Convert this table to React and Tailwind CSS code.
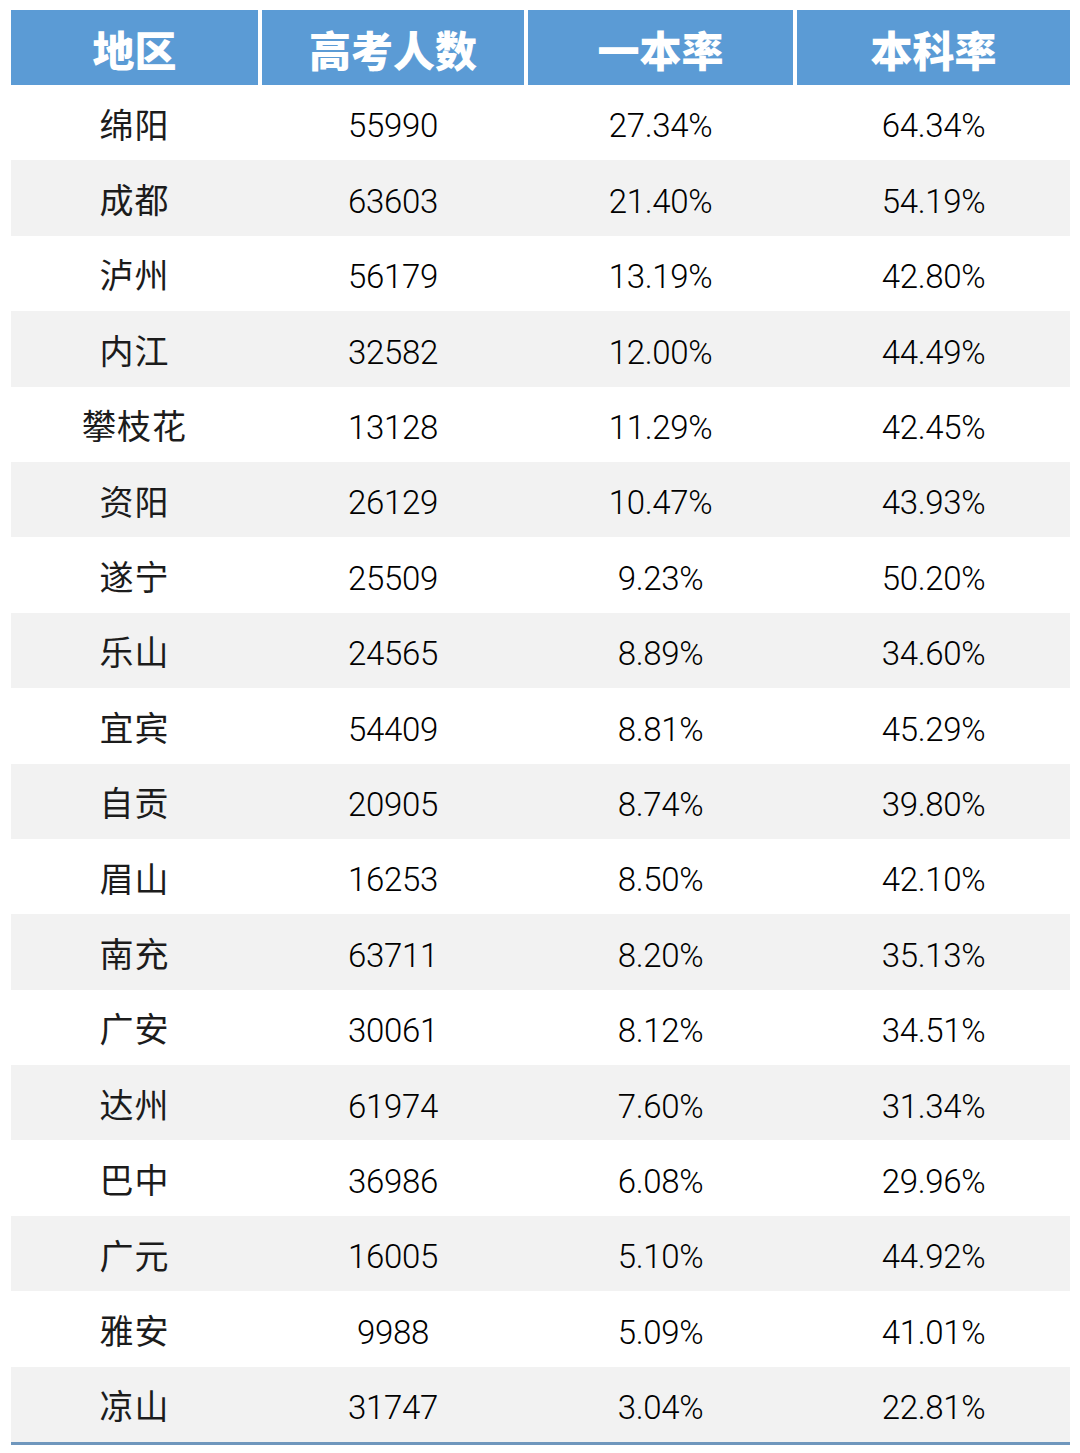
const rows = [
  ['绵阳', '55990', '27.34%', '64.34%'],
  ['成都', '63603', '21.40%', '54.19%'],
  ['泸州', '56179', '13.19%', '42.80%'],
  ['内江', '32582', '12.00%', '44.49%'],
  ['攀枝花', '13128', '11.29%', '42.45%'],
  ['资阳', '26129', '10.47%', '43.93%'],
  ['遂宁', '25509', '9.23%', '50.20%'],
  ['乐山', '24565', '8.89%', '34.60%'],
  ['宜宾', '54409', '8.81%', '45.29%'],
  ['自贡', '20905', '8.74%', '39.80%'],
  ['眉山', '16253', '8.50%', '42.10%'],
  ['南充', '63711', '8.20%', '35.13%'],
  ['广安', '30061', '8.12%', '34.51%'],
  ['达州', '61974', '7.60%', '31.34%'],
  ['巴中', '36986', '6.08%', '29.96%'],
  ['广元', '16005', '5.10%', '44.92%'],
  ['雅安', '9988', '5.09%', '41.01%'],
  ['凉山', '31747', '3.04%', '22.81%'],
];

const headers = ['地区', '高考人数', '一本率', '本科率'];

const grid = 'grid grid-cols-[247px_262px_265px_273px] gap-x-[4px]';

export default function App() {
  return (
    <div className="w-[1080px] h-[1453px] bg-white pt-[10px] pl-[11px]">
      <div className="w-[1059px]">
        <div className={grid}>
          {headers.map((h) => (
            <div
              key={h}
              className="h-[75px] bg-[#5b9bd5] flex items-center justify-center text-white text-[42px] font-black pt-[1px]"
              style={{ fontFamily: '"Noto Sans CJK SC", sans-serif' }}
            >
              {h}
            </div>
          ))}
        </div>
        {rows.map((r, i) => (
          <div key={r[0]} className={`${grid} h-[75.4px] ${i % 2 === 1 ? 'bg-[#f2f2f2]' : 'bg-white'}`}>
            {r.map((c, j) => (
              <div
                key={j}
                className={`flex items-center justify-center ${j === 0 ? 'pt-[1px] text-[34px] tracking-[1px] text-[#1c1c1c]' : 'pt-[7px] text-[33px] font-light tracking-[-0.3px] text-black'}`}
                style={{ fontFamily: j === 0 ? '"Noto Sans CJK SC", sans-serif' : 'Roboto, "Liberation Sans", sans-serif' }}
              >
                {c}
              </div>
            ))}
          </div>
        ))}
        <div className="h-[3px] bg-[#6f97bd]" />
      </div>
    </div>
  );
}
